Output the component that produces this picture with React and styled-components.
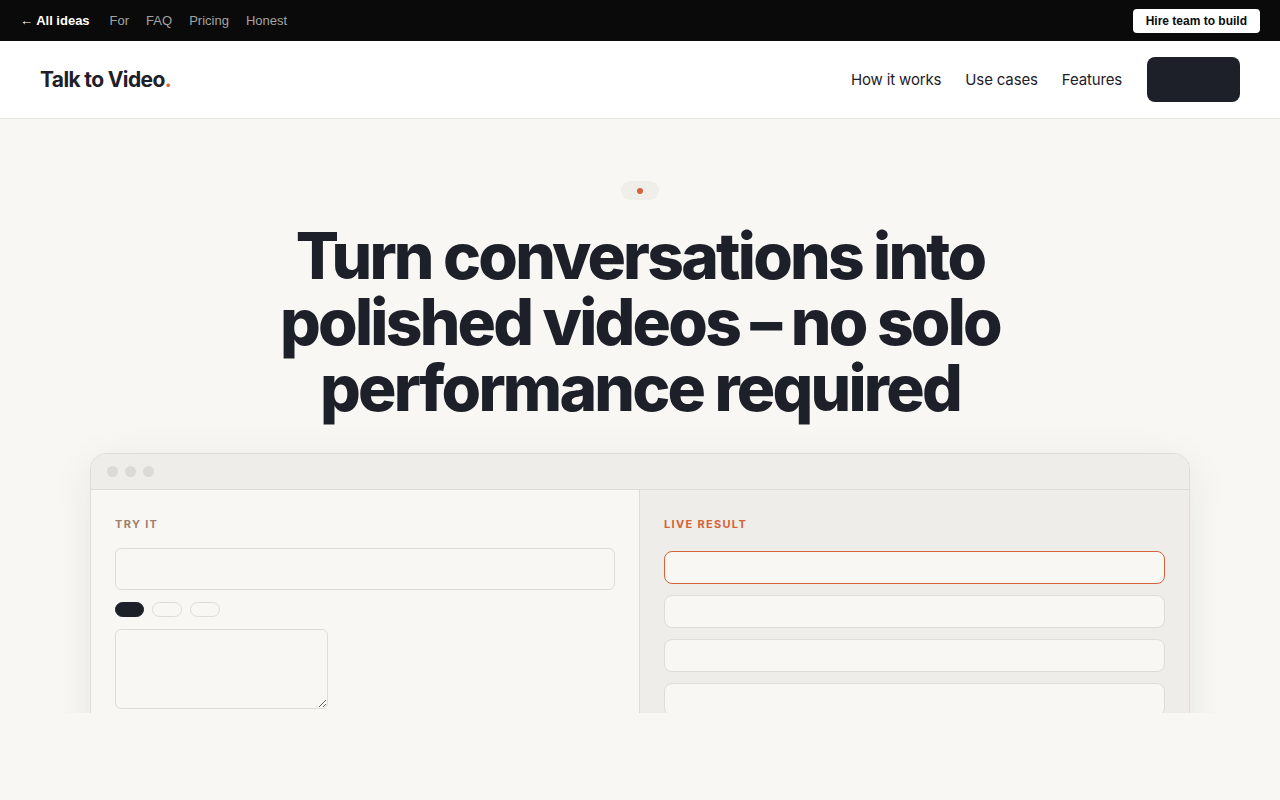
import React from "react";
import styled, { createGlobalStyle } from "styled-components";

const GlobalStyle = createGlobalStyle`
  body {
    margin: 0;
    background: #f8f7f4;
    font-family: Inter, "Noto Sans", sans-serif;
    color: #1e2029;
  }
  * { box-sizing: border-box; }
`;

const TopBar = styled.div`
  height: 41px;
  background: #0a0a0a;
  display: flex;
  align-items: center;
  justify-content: space-between;
  padding: 0 20px;
  font-family: "Liberation Sans", Arial, sans-serif;
  font-size: 13px;
`;
const TopLinks = styled.div`
  display: flex;
  align-items: center;
  gap: 17px;
`;
const TopLink = styled.a`
  color: ${(p) => (p.$strong ? "#fff" : "#a3a3a3")};
  font-weight: ${(p) => (p.$strong ? 700 : 400)};
  margin-right: ${(p) => (p.$strong ? "3px" : "0")};
  text-decoration: none;
`;
const HireButton = styled.button`
  background: #fff;
  color: #0a0a0a;
  border: none;
  border-radius: 4px;
  height: 24px;
  padding: 0 13px;
  font-family: "Liberation Sans", Arial, sans-serif;
  font-weight: 700;
  font-size: 12px;
`;

const Header = styled.header`
  height: 78px;
  background: #fff;
  border-bottom: 1px solid #e6e4df;
  display: flex;
  align-items: center;
  justify-content: space-between;
  padding: 0 40px;
`;
const Logo = styled.div`
  font-size: 21px;
  font-weight: 700;
  letter-spacing: -0.03em;
  color: #1e2029;
  span { color: #d4623a; }
`;
const Nav = styled.nav`
  display: flex;
  align-items: center;
  gap: 24px;
`;
const NavLink = styled.a`
  font-size: 15px;
  color: #1e2029;
  text-decoration: none;
  letter-spacing: -0.01em;
`;
const NavButton = styled.button`
  width: 93px;
  height: 45px;
  background: #1e2029;
  border: none;
  border-radius: 8px;
  margin-left: 1px;
`;

const Hero = styled.section`
  height: 594px;
  overflow: hidden;
  display: flex;
  flex-direction: column;
  align-items: center;
  padding-top: 62px;
  & > * { flex-shrink: 0; }
`;
const Pill = styled.div`
  width: 38px;
  height: 19px;
  border-radius: 10px;
  background: #efeee9;
  display: flex;
  align-items: center;
  justify-content: center;
  &::after {
    content: "";
    width: 6px;
    height: 6px;
    border-radius: 50%;
    background: #d4623a;
  }
`;
const Headline = styled.h1`
  margin: 23px 0 0;
  font-size: 64px;
  font-weight: 800;
  line-height: 66px;
  letter-spacing: -0.043em;
  text-align: center;
  color: #1e2029;
  width: 760px;
`;

const Browser = styled.div`
  margin-top: 32px;
  width: 1100px;
  border: 1px solid #dedcd7;
  border-radius: 16px 16px 0 0;
  overflow: hidden;
  box-shadow: 0 10px 40px rgba(30, 32, 41, 0.08);
`;
const TitleBar = styled.div`
  height: 36px;
  background: #efede9;
  border-bottom: 1px solid #dedcd7;
  display: flex;
  align-items: center;
  gap: 7px;
  padding-left: 16px;
`;
const Dot = styled.span`
  width: 11px;
  height: 11px;
  border-radius: 50%;
  background: #dcdad6;
`;
const Panels = styled.div`
  display: grid;
  grid-template-columns: 548px 1fr;
  height: 300px;
`;
const Panel = styled.div`
  background: ${(p) => (p.$alt ? "#efede9" : "#f8f7f4")};
  border-left: ${(p) => (p.$alt ? "1px solid #dedcd7" : "none")};
  padding: 27px 24px;
`;
const Label = styled.div`
  font-size: 11px;
  font-weight: 700;
  letter-spacing: 0.12em;
  color: ${(p) => (p.$accent ? "#d4623a" : "#9e7f6c")};
  margin-bottom: ${(p) => (p.$accent ? "20px" : "17px")};
`;
const Input = styled.div`
  width: 500px;
  height: 42px;
  border: 1px solid #dedcd7;
  border-radius: 6px;
  background: #f8f7f4;
`;
const Chips = styled.div`
  display: flex;
  gap: 8px;
  margin: 12px 0;
`;
const Chip = styled.span`
  width: ${(p) => (p.$active ? "29px" : "30px")};
  height: 15px;
  border-radius: 8px;
  background: ${(p) => (p.$active ? "#1e2029" : "transparent")};
  border: 1px solid ${(p) => (p.$active ? "#1e2029" : "#dedcd7")};
`;
const TextArea = styled.textarea`
  display: block;
  width: 213px;
  height: 80px;
  border: 1px solid #dedcd7;
  border-radius: 6px;
  background: #f8f7f4;
  outline: none;
`;
const ResultList = styled.div`
  display: flex;
  flex-direction: column;
  gap: 11px;
`;
const ResultRow = styled.div`
  width: 501px;
  height: 33px;
  border-radius: 8px;
  background: #f8f7f4;
  border: 1px solid ${(p) => (p.$active ? "#d4623a" : "#dedcd7")};
`;

export default function App() {
  return (
    <>
      <GlobalStyle />
      <TopBar>
        <TopLinks>
          <TopLink $strong>← All ideas</TopLink>
          <TopLink>For</TopLink>
          <TopLink>FAQ</TopLink>
          <TopLink>Pricing</TopLink>
          <TopLink>Honest</TopLink>
        </TopLinks>
        <HireButton>Hire team to build</HireButton>
      </TopBar>
      <Header>
        <Logo>
          Talk to Video<span>.</span>
        </Logo>
        <Nav>
          <NavLink>How it works</NavLink>
          <NavLink>Use cases</NavLink>
          <NavLink>Features</NavLink>
          <NavButton />
        </Nav>
      </Header>
      <Hero>
        <Pill />
        <Headline>
          Turn conversations into polished videos – no solo performance
          required
        </Headline>
        <Browser>
          <TitleBar>
            <Dot />
            <Dot />
            <Dot />
          </TitleBar>
          <Panels>
            <Panel>
              <Label>TRY IT</Label>
              <Input />
              <Chips>
                <Chip $active />
                <Chip />
                <Chip />
              </Chips>
              <TextArea />
            </Panel>
            <Panel $alt>
              <Label $accent>LIVE RESULT</Label>
              <ResultList>
                <ResultRow $active />
                <ResultRow />
                <ResultRow />
                <ResultRow />
              </ResultList>
            </Panel>
          </Panels>
        </Browser>
      </Hero>
    </>
  );
}
